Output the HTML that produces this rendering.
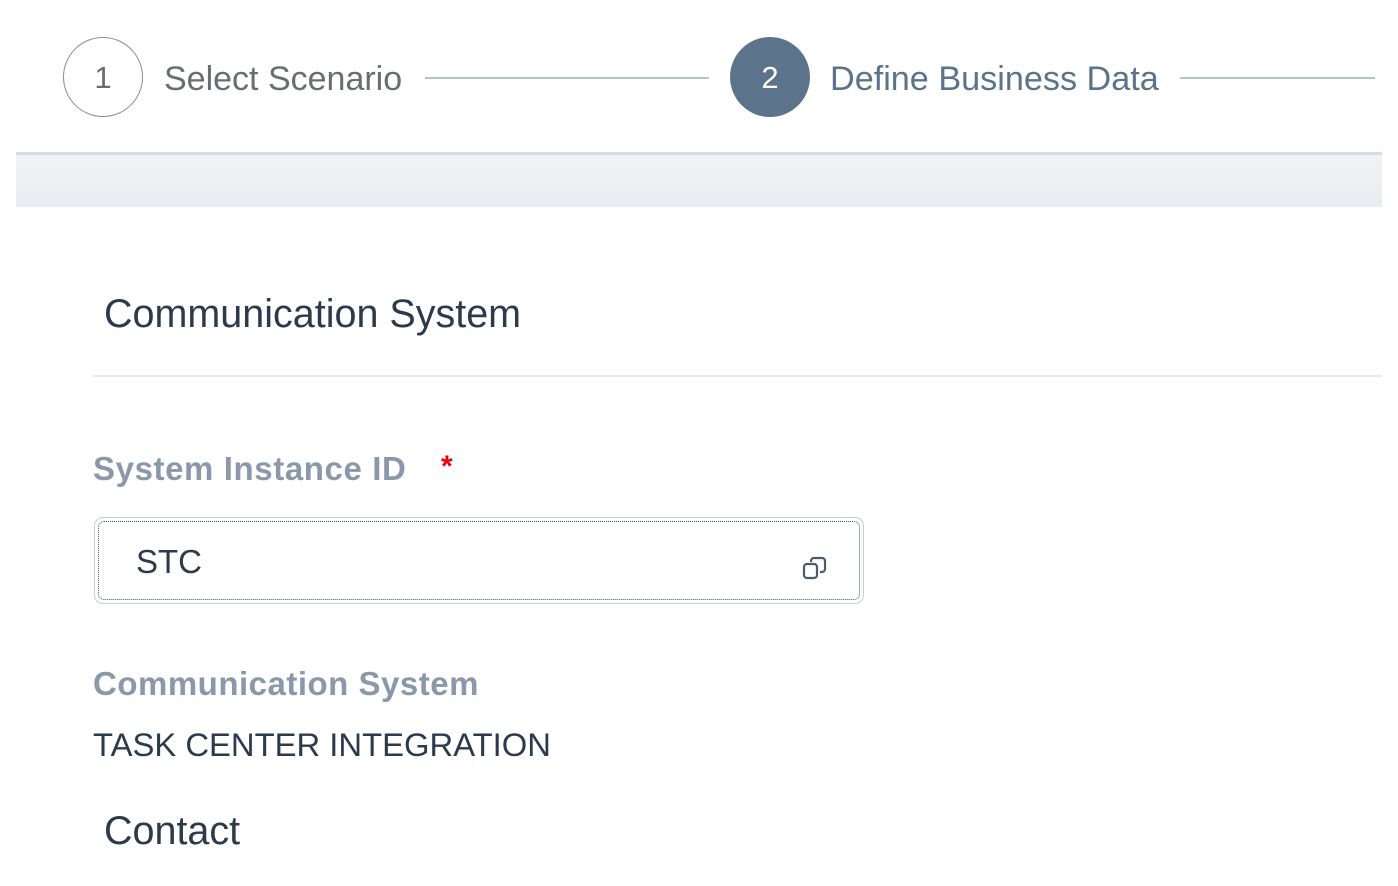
<!DOCTYPE html>
<html><head><style>
body{margin:0;width:1398px;height:886px;background:#fff;position:relative;overflow:hidden;font-family:"Liberation Sans",sans-serif;}
.a{position:absolute;white-space:nowrap;}
</style></head><body>
<div class="a" style="left:63px;top:37px;width:80px;height:80px;border:1.5px solid #8a8d90;border-radius:50%;box-sizing:border-box;text-align:center;line-height:80px;font-size:31px;color:#6a6d70;">1</div>
<div class="a" style="left:164px;top:60px;font-size:34px;color:#6a6d70;">Select Scenario</div>
<div class="a" style="left:425px;top:77px;width:284px;height:2px;background:#b8c2cc;"></div>
<div class="a" style="left:730px;top:37px;width:80px;height:80px;background:#5b738b;border-radius:50%;text-align:center;line-height:82px;font-size:31px;color:#fff;">2</div>
<div class="a" style="left:830px;top:60px;font-size:34.2px;color:#5b738b;">Define Business Data</div>
<div class="a" style="left:1180px;top:77px;width:195px;height:2px;background:#b8c2cc;"></div>
<div class="a" style="left:16px;top:152px;width:1366px;height:3px;background:#cddeec;"></div>
<div class="a" style="left:16px;top:155px;width:1366px;height:52px;background:linear-gradient(#f1f2f5,#e9ecf0);"></div>
<div class="a" style="left:104px;top:292px;font-size:39.5px;color:#2b3a4d;">Communication System</div>
<div class="a" style="left:93px;top:375px;width:1289px;height:2px;background:#e6e8ea;"></div>
<div class="a" style="left:93px;top:450px;font-size:33px;letter-spacing:0.6px;font-weight:bold;color:#8a98aa;">System Instance ID</div>
<div class="a" style="left:441px;top:450px;font-size:30px;font-weight:bold;color:#e00;">*</div>
<div class="a" style="left:94px;top:517px;width:770px;height:87px;border:1.5px solid #c5cdd6;border-radius:9px;box-sizing:border-box;"></div>
<div class="a" style="left:98px;top:521px;width:762px;height:79px;border:1.5px dotted #4a5a6a;border-radius:6px;box-sizing:border-box;"></div>
<div class="a" style="left:136px;top:543px;font-size:33px;color:#2b3a4d;">STC</div>
<svg class="a" style="left:801px;top:554px" width="28" height="28" viewBox="0 0 28 28" fill="none" stroke="#4a5a6a" stroke-width="2.2"><rect x="3" y="10" width="13" height="14" rx="3"/><path d="M10 8 V7 a3 3 0 0 1 3-3 h8 a3 3 0 0 1 3 3 v8 a3 3 0 0 1-3 3 h-2"/></svg>
<div class="a" style="left:93px;top:665px;font-size:33px;letter-spacing:0.5px;font-weight:bold;color:#8a98aa;">Communication System</div>
<div class="a" style="left:93px;top:726px;font-size:32.8px;color:#2b3a4d;">TASK CENTER INTEGRATION</div>
<div class="a" style="left:104px;top:809px;font-size:39.5px;color:#2b3a4d;">Contact</div>
</body></html>
